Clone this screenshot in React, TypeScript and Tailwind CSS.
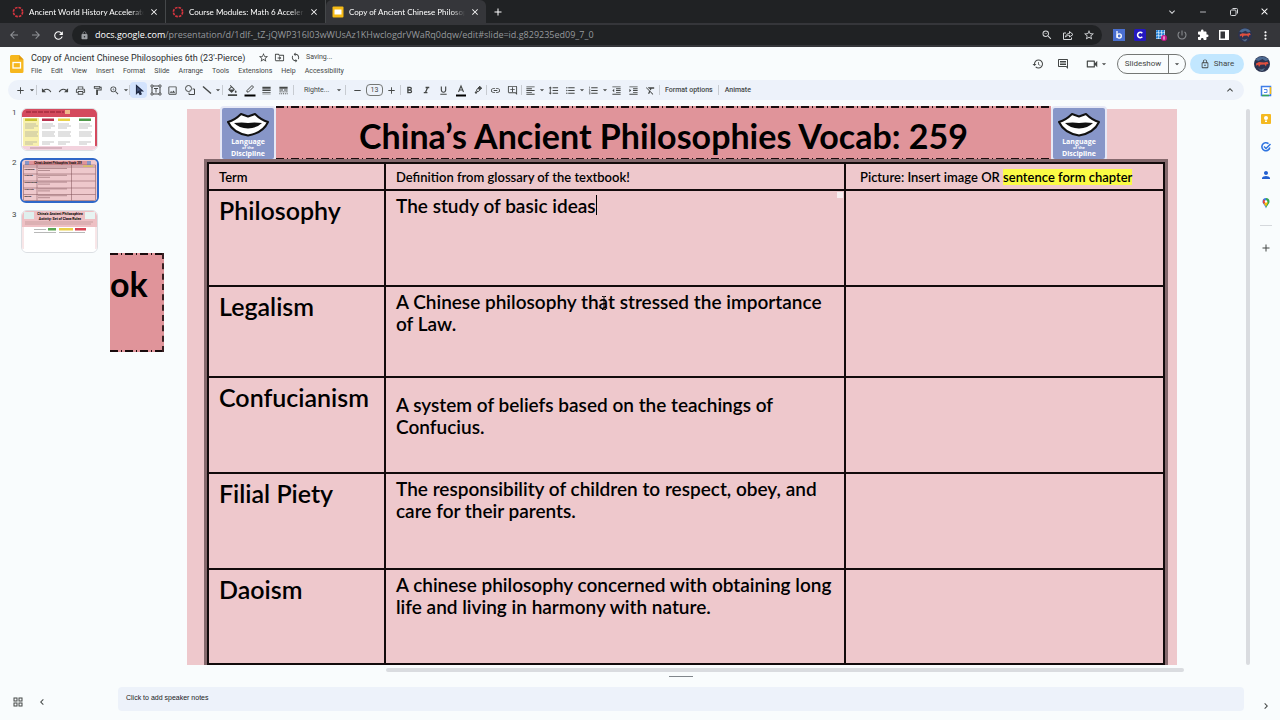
import { ReactNode } from 'react';
import type { IconType } from 'react-icons';
import {
  MdAdd, MdArrowBack, MdArrowDropDown, MdArrowForward, MdChevronLeft, MdChevronRight, MdClose, MdExpandLess,
  MdExpandMore, MdExtension, MdFormatAlignLeft, MdFormatBold, MdFormatClear, MdFormatColorFill,
  MdFormatIndentDecrease, MdFormatIndentIncrease, MdFormatItalic, MdFormatLineSpacing, MdFormatListBulleted,
  MdFormatListNumbered, MdFormatUnderlined, MdHistory, MdLineStyle, MdLineWeight, MdLink, MdLock, MdMoreVert,
  MdOutlineAddComment, MdOutlineDriveFileMove, MdOutlineFormatPaint, MdOutlineGridView, MdOutlineImage,
  MdOutlineInsertComment, MdOutlineLock, MdOutlinePrint, MdOutlineVideocam, MdPerson, MdPowerSettingsNew,
  MdRedo, MdRefresh, MdRemove, MdStarBorder, MdSync, MdUndo, MdZoomIn, MdZoomOut,
} from 'react-icons/md';

const menus = ['File', 'Edit', 'View', 'Insert', 'Format', 'Slide', 'Arrange', 'Tools', 'Extensions', 'Help', 'Accessibility'];

interface VocabRow {
  term: string;
  definition: string;
  row: string;
  pad: string;
  caret?: boolean;
  pointer?: boolean;
}

const vocab: VocabRow[] = [
  { term: 'Philosophy', definition: 'The study of basic ideas', row: 'h-24', pad: 'pt-1', caret: true },
  { term: 'Legalism', definition: 'A Chinese philosophy that stressed the importance of Law.', row: 'h-[91px]', pad: 'pt-1', pointer: true },
  { term: 'Confucianism', definition: 'A system of beliefs based on the teachings of Confucius.', row: 'h-24', pad: 'pt-4' },
  { term: 'Filial Piety', definition: 'The responsibility of children to respect, obey, and care for their parents.', row: 'h-24', pad: 'pt-1' },
  { term: 'Daoism', definition: 'A chinese philosophy concerned with obtaining long life and living in harmony with nature.', row: 'h-[95px]', pad: 'pt-1' },
];

/* ---------- Small drawings ---------- */

function CanvasIcon() {
  return (
    <svg className="h-3 w-3 shrink-0" viewBox="0 0 12 12" fill="none">
      <circle cx="6" cy="6" r="4.6" stroke="#d8353f" strokeWidth="1.6" strokeDasharray="2.6 1" />
    </svg>
  );
}

function SlidesTabIcon() {
  return (
    <svg className="h-3 w-3 shrink-0" viewBox="0 0 12 12">
      <rect x="0.5" y="0.5" width="11" height="11" rx="1" fill="#f5ba15" />
      <rect x="2.5" y="3.5" width="7" height="5" fill="#fff" />
    </svg>
  );
}

function SlidesLogo() {
  return (
    <svg className="h-[18px] w-[14px] shrink-0" viewBox="0 0 14 18">
      <path d="M1.5 0H9l4.5 4.5v12a1.5 1.5 0 0 1-1.5 1.5H1.5A1.5 1.5 0 0 1 0 16.500V1.500A1.500 1.500 0 0 1 1.500 0z" fill="#f6b71e" />
      <path d="M9 0l4.500 4.500H9z" fill="#e09a10" />
      <rect x="3" y="7.500" width="7.500" height="5.500" fill="none" stroke="#fff" strokeWidth="1.300" />
    </svg>
  );
}

function Avatar({ className }: { className: string }) {
  return (
    <svg className={className} viewBox="0 0 16 16">
      <circle cx="8" cy="8" r="8" fill="#2b3350" />
      <path d="M1.500 4a8 8 0 0 1 13 0l-3 1-3-2-4 2z" fill="#4c6a92" />
      <path d="M2 7.500l3-1.500 5 .5 3.500-.8 1 2.300-2 .2-.5 2.300-1.500-2-4 .3-1.500 2.200-.8-2.300-2 1z" fill="#e0503f" />
      <path d="M4 12l3 1.500 4-1.500-2 3H7z" fill="#566b86" />
    </svg>
  );
}

function CursorIcon() {
  return (
    <svg className="h-3 w-3" viewBox="0 0 12 12" fill="none" stroke="#1f2a44" strokeWidth="1.200">
      <path d="M3.500 1.500v8l2-2 1.500 3 1.200-.6-1.400-2.900h2.700z" fill="#44547c" />
    </svg>
  );
}

function TextBoxIcon() {
  return (
    <svg className="h-3 w-3" viewBox="0 0 12 12" fill="none" stroke="currentColor">
      <rect x="2" y="2" width="8" height="8" />
      <path d="M4 4.500h4M6 4.500V8.500" />
      <path d="M1 1h2v2H1zM9 1h2v2H9zM1 9h2v2H1zM9 9h2v2H9z" fill="#edf2fa" strokeWidth="0.800" />
    </svg>
  );
}

function ShapeIcon() {
  return (
    <svg className="h-3 w-3" viewBox="0 0 12 12" fill="none" stroke="currentColor">
      <circle cx="4.500" cy="4.500" r="3" />
      <path d="M8.500 5H10.500V10.500H5V8.500" />
    </svg>
  );
}

function LineIcon() {
  return (
    <svg className="h-3 w-3" viewBox="0 0 12 12" fill="none" stroke="currentColor" strokeWidth="1.400">
      <path d="M2 2.500L10 9.500" />
    </svg>
  );
}

function PenIcon() {
  return (
    <svg className="h-[14px] w-3" viewBox="0 0 12 14">
      <path d="M3 9V7.500L8 2.500 9.500 4 4.500 9z" fill="none" stroke="currentColor" />
      <rect x="0.500" y="11.500" width="11" height="2" fill="#000" />
    </svg>
  );
}

function TextColorIcon() {
  return (
    <svg className="h-[14px] w-3" viewBox="0 0 12 14">
      <path d="M3.500 9L6 3l2.500 6M4.400 7h3.200" fill="none" stroke="currentColor" strokeWidth="1.100" />
      <rect x="1" y="11.500" width="10" height="2" fill="#000" />
    </svg>
  );
}

function HighlighterIcon() {
  return (
    <svg className="h-3 w-3" viewBox="0 0 12 12" fill="none" stroke="currentColor">
      <path d="M4.500 6l3-3.500L9.500 4 6.500 7.500H5z" />
      <path d="M7.500 2.500l2 1.500L8 5.500 6 4.500zM4 7.500L3 9h2z" fill="currentColor" />
    </svg>
  );
}

function ShareIcon() {
  return (
    <svg className="h-3 w-3" viewBox="0 0 12 12" fill="none" stroke="currentColor">
      <path d="M4 4H1.500v6.500h8V8.500" />
      <path d="M3.500 8C4 5.500 5.500 4.500 7.500 4.500V2.500L11 5.500 7.500 8V6.300C6 6.300 4.500 6.800 3.500 8z" />
    </svg>
  );
}

function Lips() {
  return (
    <svg className="h-[26px] w-11" viewBox="0 0 44 26">
      <path d="M2 11Q9 9 15 3L22 5.500 29 3Q35 9 42 11Q37 22 22 24.500Q7 22 2 11z" fill="#fff" stroke="#111" strokeWidth="2" strokeLinejoin="round" />
      <path d="M8 12Q16 11 22 12Q28 11 36 12Q31 17 22 17.500Q13 17 8 12z" fill="#111" />
    </svg>
  );
}

/* ---------- Shared pieces ---------- */

function Tool({ label, children, active = false }: { label: string; children: ReactNode; active?: boolean }) {
  return (
    <button aria-label={label} className={`flex h-4 w-[17px] shrink-0 items-center justify-center rounded-sm ${active ? 'bg-[#d3e3fd]' : ''}`}>
      {children}
    </button>
  );
}

function IconTool({ icon: Icon, label }: { icon: IconType; label: string }) {
  return (
    <button aria-label={label} className="flex h-4 w-[17px] shrink-0 items-center justify-center">
      <Icon className="h-[11px] w-[11px]" />
    </button>
  );
}

function Caret() {
  return <MdArrowDropDown className="-mx-[2px] h-[10px] w-[10px] shrink-0" />;
}

function Separator({ className = '' }: { className?: string }) {
  return <span className={`h-[10px] w-px shrink-0 bg-[#c7cbd1] ${className}`} />;
}

interface TabProps {
  title: string;
  icon: ReactNode;
  active?: boolean;
}

function Tab({ title, icon, active = false }: TabProps) {
  return (
    <div className={`flex w-40 items-center gap-[5px] pr-[6px] pl-[6px] ${active ? 'rounded-t-md bg-[#35363a]' : 'border-r border-[#45484a]'}`}>
      {icon}
      <button className="min-w-0 flex-1 text-left font-['Lato',sans-serif] text-[8px] whitespace-nowrap text-white [mask-image:linear-gradient(90deg,#000_88%,transparent)]">
        {title}
      </button>
      <button aria-label="Close tab"><MdClose className="h-[10px] w-[10px] text-white" /></button>
    </div>
  );
}

function DashDot() {
  return <div className="h-[2px] bg-[repeating-linear-gradient(90deg,#1a0b0d_0_8px,transparent_8px_11px,#1a0b0d_11px_12px,transparent_12px_15px)]" />;
}

function DisciplineBadge() {
  return (
    <div className="flex h-[55px] w-14 shrink-0 flex-col items-center rounded-sm border-2 border-[#e6e8f6] bg-[#8796c8] pt-[3px] font-['Open_Sans',sans-serif] text-[7px] leading-[7px] font-bold text-white">
      <Lips />
      <span className="mt-px">Language</span>
      <span className="text-[4px] leading-[5px]">of the</span>
      <span>Discipline</span>
    </div>
  );
}

/* ---------- Browser ---------- */

function BrowserChrome() {
  return (
    <div className="bg-[#202224] font-['Open_Sans',sans-serif] text-[#d5d7da]">
      <div className="flex h-[23px] pl-[6px]">
        <Tab title="Ancient World History Accelerate" icon={<CanvasIcon />} />
        <Tab title="Course Modules: Math 6 Acceler" icon={<CanvasIcon />} />
        <Tab title="Copy of Ancient Chinese Philosop" icon={<SlidesTabIcon />} active />
        <button aria-label="New tab" className="px-[6px]"><MdAdd className="h-3 w-3 text-white" /></button>
        <div className="ml-auto flex items-center">
          <button aria-label="Search tabs" className="flex w-[31px] justify-center"><MdExpandMore className="h-3 w-3" /></button>
          <button aria-label="Minimize" className="flex w-[31px] justify-center"><MdRemove className="h-[10px] w-[10px]" /></button>
          <button aria-label="Restore" className="flex w-[31px] justify-center">
            <svg className="h-2 w-2" viewBox="0 0 8 8" fill="none" stroke="currentColor">
              <rect x="0.500" y="2" width="5.500" height="5.500" rx="1" />
              <path d="M2.500 .5H6.500a1 1 0 0 1 1 1V5.500" />
            </svg>
          </button>
          <button aria-label="Close" className="flex w-[31px] justify-center"><MdClose className="h-[11px] w-[11px] text-white" /></button>
        </div>
      </div>
      <div className="flex h-6 items-center bg-[#35363a] pr-1">
        <button aria-label="Back" className="flex w-7 justify-center"><MdArrowBack className="h-3 w-3 text-[#8f9296]" /></button>
        <button aria-label="Forward" className="flex w-4 justify-center"><MdArrowForward className="h-3 w-3 text-[#8f9296]" /></button>
        <button aria-label="Reload" className="flex w-7 justify-center"><MdRefresh className="h-[13px] w-[13px] text-white" /></button>
        <div className="flex h-5 min-w-0 flex-1 items-center rounded-full bg-[#202224] pr-[7px] pl-2">
          <MdLock className="h-[9px] w-[9px] shrink-0 text-[#9a9da1]" />
          <div role="textbox" aria-label="Address" tabIndex={0} className="min-w-0 flex-1 overflow-hidden pl-[6px] text-[9px] leading-4 whitespace-nowrap text-[#96999d]">
            <span className="text-white">docs.google.com</span>/presentation/d/1dlf-_tZ-jQWP316I03wWUsAz1KHwclogdrVWaRq0dqw/edit#slide=id.g829235ed09_7_0
          </div>
          <div className="flex gap-[9px]">
            <button aria-label="Zoom"><MdZoomOut className="h-3 w-3" /></button>
            <button aria-label="Share page"><ShareIcon /></button>
            <button aria-label="Bookmark"><MdStarBorder className="h-3 w-3" /></button>
          </div>
        </div>
        <div className="ml-[6px] flex items-center">
          <button aria-label="Bitmoji" className="flex w-[21px] justify-center">
            <svg className="h-3 w-3" viewBox="0 0 12 12" fill="none" stroke="#fff" strokeWidth="1.300">
              <rect width="12" height="12" fill="#4a6fd0" stroke="none" />
              <path d="M4 2v7" /><circle cx="6.200" cy="7" r="2.100" />
            </svg>
          </button>
          <button aria-label="Clever" className="flex w-[21px] justify-center">
            <svg className="h-3 w-3" viewBox="0 0 12 12" fill="none" stroke="#fff" strokeWidth="1.600">
              <rect width="12" height="12" rx="1.500" fill="#2418c0" stroke="none" />
              <path d="M8.300 4.200A2.700 2.700 0 1 0 8.300 7.800" />
            </svg>
          </button>
          <button aria-label="App grid" className="flex w-[21px] justify-center">
            <svg className="h-3 w-3" viewBox="0 0 12 12">
              <rect x="1" y="1" width="9" height="9" fill="#e8f4ff" />
              <path d="M2.500 1v9M5.500 1v9M8.500 1v9M1 2.500h9M1 5.500h9M1 8.500h9" stroke="#2784d8" strokeWidth="1.800" strokeDasharray="2.200 .8" />
              <circle cx="9" cy="9" r="3" fill="#c2188b" /><path d="M9 7.300v3.400" stroke="#fff" />
            </svg>
          </button>
          <button aria-label="Power" className="flex w-[21px] justify-center"><MdPowerSettingsNew className="h-3 w-3 text-[#8b8e92]" /></button>
          <button aria-label="Extensions" className="flex w-[21px] justify-center"><MdExtension className="h-3 w-3 text-white" /></button>
          <button aria-label="Side panel" className="flex w-[21px] justify-center">
            <svg className="h-[10px] w-[10px]" viewBox="0 0 10 10"><rect width="10" height="10" fill="#fff" /><rect x="1.500" y="1.500" width="4.500" height="7" fill="#35363a" /></svg>
          </button>
          <button aria-label="Profile" className="flex w-[21px] justify-center"><Avatar className="h-[14px] w-[14px]" /></button>
          <button aria-label="Browser menu" className="flex w-[21px] justify-center"><MdMoreVert className="h-[13px] w-[13px] text-white" /></button>
        </div>
      </div>
    </div>
  );
}

/* ---------- Slides header and toolbar ---------- */

function DocHeader() {
  return (
    <header className="flex h-[33px] items-center pr-[10px] pl-[10px] text-[#444746]">
      <SlidesLogo />
      <div className="ml-[7px]">
        <div className="flex h-[14px] items-center gap-[5px]">
          <input aria-label="Document title" defaultValue="Copy of Ancient Chinese Philosophies 6th (23'-Pierce)" className="w-[222px] text-[9px] leading-[14px] text-[#2b2d2f]" />
          <button aria-label="Star"><MdStarBorder className="h-[11px] w-[11px]" /></button>
          <button aria-label="Move"><MdOutlineDriveFileMove className="h-[11px] w-[11px]" /></button>
          <MdSync className="h-[11px] w-[11px]" />
          <span className="text-[7px]">Saving...</span>
        </div>
        <nav className="flex h-3 gap-[9px] text-[7px] leading-3">
          {menus.map((menu) => (
            <button key={menu}>{menu}</button>
          ))}
        </nav>
      </div>
      <div className="ml-auto flex items-center">
        <button aria-label="Version history" className="mr-[13px]"><MdHistory className="h-3 w-3" /></button>
        <button aria-label="Comments" className="mr-4"><MdOutlineInsertComment className="h-3 w-3" /></button>
        <button aria-label="Join a call" className="mr-[10px] flex items-center gap-[2px]"><MdOutlineVideocam className="h-[14px] w-[14px]" /><Caret /></button>
        <div className="mr-1 flex h-5 items-center rounded-full border border-[#747775] text-[8px]">
          <button className="flex h-full w-[51px] items-center justify-center border-r border-[#747775]">Slideshow</button>
          <button aria-label="Slideshow options" className="flex w-4 justify-center"><Caret /></button>
        </div>
        <button className="mr-[10px] flex h-5 w-[54px] items-center justify-center gap-1 rounded-full bg-[#c2e7ff] text-[8px]">
          <MdOutlineLock className="h-[10px] w-[10px]" />Share
        </button>
        <button aria-label="Account"><Avatar className="h-4 w-4" /></button>
      </div>
    </header>
  );
}

function Toolbar() {
  return (
    <div className="mr-2 ml-2 flex h-5 items-center overflow-hidden rounded-full bg-[#edf2fa] pl-1 text-[#444746]">
      <IconTool icon={MdAdd} label="New slide" /><Caret />
      <Separator className="mx-px" />
      <IconTool icon={MdUndo} label="Undo" />
      <IconTool icon={MdRedo} label="Redo" />
      <IconTool icon={MdOutlinePrint} label="Print" />
      <IconTool icon={MdOutlineFormatPaint} label="Paint format" />
      <IconTool icon={MdZoomIn} label="Zoom" /><Caret />
      <Separator />
      <Tool label="Select" active><CursorIcon /></Tool>
      <Tool label="Text box"><TextBoxIcon /></Tool>
      <IconTool icon={MdOutlineImage} label="Insert image" />
      <Tool label="Shape"><ShapeIcon /></Tool>
      <Tool label="Line"><LineIcon /></Tool><Caret />
      <Separator className="mx-px" />
      <IconTool icon={MdFormatColorFill} label="Fill color" />
      <Tool label="Border color"><PenIcon /></Tool>
      <IconTool icon={MdLineWeight} label="Border weight" />
      <IconTool icon={MdLineStyle} label="Border dash" />
      <Separator className="mr-[10px] ml-px" />
      <select aria-label="Font" className="w-8 shrink-0 appearance-none text-[7px] leading-4">
        <option>Righte...</option>
      </select>
      <Caret />
      <Separator className="mx-[3px]" />
      <IconTool icon={MdRemove} label="Decrease font size" />
      <input aria-label="Font size" defaultValue="13" className="h-3 w-[17px] shrink-0 rounded-sm border border-[#747775] text-center text-[7px]" />
      <IconTool icon={MdAdd} label="Increase font size" />
      <Separator />
      <IconTool icon={MdFormatBold} label="Bold" />
      <IconTool icon={MdFormatItalic} label="Italic" />
      <IconTool icon={MdFormatUnderlined} label="Underline" />
      <Tool label="Text color"><TextColorIcon /></Tool>
      <Tool label="Highlight color"><HighlighterIcon /></Tool>
      <Separator />
      <IconTool icon={MdLink} label="Insert link" />
      <IconTool icon={MdOutlineAddComment} label="Add comment" />
      <Separator />
      <IconTool icon={MdFormatAlignLeft} label="Align" /><Caret />
      <IconTool icon={MdFormatLineSpacing} label="Line spacing" />
      <IconTool icon={MdFormatListBulleted} label="Bulleted list" /><Caret />
      <IconTool icon={MdFormatListNumbered} label="Numbered list" /><Caret />
      <IconTool icon={MdFormatIndentDecrease} label="Decrease indent" />
      <IconTool icon={MdFormatIndentIncrease} label="Increase indent" />
      <IconTool icon={MdFormatClear} label="Clear formatting" />
      <Separator />
      <button className="px-[5px] text-[7px] font-medium whitespace-nowrap">Format options</button>
      <Separator />
      <button className="px-[6px] text-[7px] font-medium">Animate</button>
      <button aria-label="Hide menus" className="mr-2 ml-auto"><MdExpandLess className="h-3 w-3" /></button>
    </div>
  );
}

/* ---------- Filmstrip ---------- */

function ThumbOne() {
  const columns = [
    { x: 3, color: '#c9c23a' }, { x: 20, color: '#b8324e' }, { x: 36, color: '#e8d24a' }, { x: 57, color: '#4f9a4a' },
  ];
  return (
    <svg className="block w-full" viewBox="0 0 75 41">
      <rect width="75" height="41" fill="#fff" />
      <rect width="75" height="8" fill="#d44a5e" />
      <path d="M4 3h38" stroke="#a52c40" strokeWidth="1.500" strokeDasharray="5 1" />
      <rect x="43" y="1" width="5" height="4" fill="#f0b98a" />
      <rect x="1" y="9" width="16" height="28" fill="#f8f1ae" />
      <rect x="73" y="8" width="2" height="30" fill="#d44a5e" />
      <rect y="37" width="75" height="4" fill="#f3d3de" />
      {columns.map(({ x, color }) => (
        <g key={x}>
          <rect x={x} y="9.500" width="12" height="2.500" fill={color} />
          <path d={`M${x} 15h11M${x} 17h13M${x} 19h9M${x} 23h13M${x} 25h12M${x} 27h13M${x} 33h12M${x} 35h8`} stroke="#9b9b9b" strokeWidth="0.600" />
        </g>
      ))}
      <path d="M8 39h32" stroke="#a37585" strokeWidth="0.700" />
    </svg>
  );
}

function ThumbTwo() {
  return (
    <svg className="block w-full" viewBox="0 0 75 41">
      <rect width="75" height="41" fill="#eec8cc" />
      <rect x="7" y="1" width="58" height="4" fill="#e0949a" />
      <rect x="3" y="1" width="4" height="4" fill="#8796c8" />
      <rect x="65" y="1" width="4" height="4" fill="#8796c8" />
      <text x="36" y="4" textAnchor="middle" fontSize="2.600" fontWeight="700">China’s Ancient Philosophies Vocab: 259</text>
      <rect x="61" y="5.500" width="10" height="1.200" fill="#f6ee4b" />
      <path d="M1.500 5h72v35.500h-72zM1.500 7h72M1.500 14h72M1.500 21h72M1.500 28h72M1.500 34.500h72M15 5v35.500M49.500 5v35.500" fill="none" stroke="#7c4f55" strokeWidth="0.500" />
      {vocab.map(({ term }, i) => (
        <g key={term}>
          <text x="2.500" y={9.5 + i * 6.8} fontSize="2" fontWeight="700">{term}</text>
          <path d={`M16 ${8.5 + i * 6.8}h29M16 ${10.5 + i * 6.8}h12`} stroke="#8d6469" strokeWidth="0.600" />
        </g>
      ))}
    </svg>
  );
}

function ThumbThree() {
  return (
    <svg className="block w-full" viewBox="0 0 75 41">
      <rect width="75" height="41" fill="#fff" />
      <rect width="75" height="16" fill="#eec0c4" />
      <rect x="2" y="1" width="10" height="7" fill="#dff0ee" />
      <rect x="63" y="1" width="10" height="7" fill="#e8f4f2" />
      <text x="38" y="4" textAnchor="middle" fontSize="3.500" fontWeight="700">China’s Ancient Philosophies</text>
      <text x="38" y="8.500" textAnchor="middle" fontSize="3.500" fontWeight="700">Activity: Set of Class Rules</text>
      <path d="M3 11h68M3 13h66" stroke="#b38a8e" strokeWidth="0.600" />
      <path d="M12 18.500h12M12 21.500h22M37 21.500h26" stroke="#888" strokeWidth="0.600" />
      <rect x="26" y="17" width="8" height="2.500" fill="#5ca653" />
      <rect x="37" y="17" width="14" height="2.500" fill="#ead04b" />
      <rect x="53" y="17" width="11" height="2.500" fill="#d84554" />
      <path d="M1 16v22M74 16v22" stroke="#eec0c4" strokeWidth="0.800" />
    </svg>
  );
}

function Filmstrip() {
  const thumbs = [<ThumbOne />, <ThumbTwo />, <ThumbThree />];
  return (
    <aside className="flex w-[110px] shrink-0 flex-col pt-2 pb-3">
      <ol className="flex flex-col gap-[7px]">
        {thumbs.map((thumb, i) => (
          <li key={i} className="flex gap-1 pl-3 text-[8px] leading-[10px] text-[#444746]">
            <span className="w-1">{i + 1}</span>
            <button
              aria-label={`Slide ${i + 1}`}
              className={`overflow-hidden rounded-md ${i === 1 ? 'w-[79px] border-2 border-[#2f67c8]' : 'mx-px w-[77px] border border-[#dcdfe3]'}`}
            >
              {thumb}
            </button>
          </li>
        ))}
      </ol>
      <div className="mt-auto flex items-center gap-3 pl-3 text-[#444746]">
        <button aria-label="Grid view"><MdOutlineGridView className="h-3 w-3" /></button>
        <button aria-label="Hide filmstrip"><MdChevronLeft className="h-3 w-3" /></button>
      </div>
    </aside>
  );
}

/* ---------- Slide ---------- */

function VocabTable() {
  return (
    <table className="w-full table-fixed border-collapse border-2 border-[#120a0b] text-left text-black">
      <thead>
        <tr className="h-[27px] text-[13px] leading-5">
          <th className="w-[177px] border-2 border-[#120a0b] pl-[10px] font-semibold">Term</th>
          <th className="w-[460px] border-2 border-[#120a0b] pl-[10px] font-semibold">Definition from glossary of the textbook!</th>
          <th className="border-2 border-[#120a0b] pl-[14px] font-semibold whitespace-nowrap">
            Picture: Insert image OR <mark className="bg-[#fbfb45] text-black">sentence form chapter</mark>
          </th>
        </tr>
      </thead>
      <tbody>
        {vocab.map(({ term, definition, row, pad, caret, pointer }) => (
          <tr key={term} className={`${row} align-top`}>
            <th className="border-2 border-[#120a0b] pt-[3px] pl-[10px] text-[25px] leading-8 font-semibold">{term}</th>
            <td className={`relative border-2 border-[#120a0b] pr-[6px] pl-[10px] text-[19px] leading-[22px] font-semibold ${pad}`}>
              {definition}
              {caret && (
                <>
                  <span className="inline-block h-5 w-px bg-black align-top" />
                  <span className="absolute top-px right-px h-[6px] w-[6px] bg-[#f7eef0]" />
                </>
              )}
              {pointer && (
                <svg className="absolute top-[9px] left-[215px] h-[14px] w-[6px]" viewBox="0 0 6 14" fill="none" stroke="#000">
                  <path d="M1 .5h1.500l.5.5.5-.5H5M3 1v12M1 13.500h1.500l.5-.5.5.5H5" />
                </svg>
              )}
            </td>
            <td className="border-2 border-[#120a0b]" />
          </tr>
        ))}
      </tbody>
    </table>
  );
}

function Slide() {
  return (
    <div className="relative mr-[69px] ml-[23px] flex-1 bg-[#eec8cc] pt-[50px] pr-[9px] pl-[17px]">
      {/* Banner sits above the top edge of the slide */}
      <div className="absolute -top-[3px] right-[70px] left-[33px] flex items-start">
        <DisciplineBadge />
        <div className="flex h-[54px] flex-1 flex-col justify-between bg-[#e0949a]">
          <DashDot />
          <h1 className="pt-1 text-center text-[34px] leading-[45px] font-bold whitespace-nowrap text-black">
            China’s Ancient Philosophies Vocab: 259
          </h1>
          <DashDot />
        </div>
        <DisciplineBadge />
      </div>
      <div className="relative border-x-[3px] border-t-[3px] border-[#85696d]">
        <VocabTable />
      </div>
    </div>
  );
}

function Editor() {
  return (
    <main className="flex min-w-0 flex-1 flex-col">
      <div className="flex pt-[9px]">
        <div className="flex min-w-0 flex-1 font-['Lato',sans-serif]">
          <div className="mt-36 flex h-[99px] w-[54px] shrink-0 flex-col justify-between border-r-2 border-dashed border-[#3a2023] bg-[#e0949a]">
            <DashDot />
            <p className="mb-auto pt-1 text-[34px] leading-[50px] font-bold text-black">ok</p>
            <DashDot />
          </div>
          <Slide />
        </div>
        <div className="mr-[2px] w-1 rounded-full bg-[#dadce0]" />
      </div>
      <div className="mt-[3px] mr-[68px] ml-[276px] h-1 rounded-full bg-[#dadce0]" />
      <div className="mx-auto mt-1 h-px w-6 bg-[#80868b]" />
      <textarea
        aria-label="Speaker notes"
        placeholder="Click to add speaker notes"
        rows={1}
        className="mt-auto mr-2 mb-[9px] ml-2 h-6 resize-none rounded-sm bg-[#edf2fa] px-2 py-[5px] font-['Liberation_Sans',sans-serif] text-[7px] leading-3 placeholder:text-[#202124]"
      />
    </main>
  );
}

function SidePanel() {
  return (
    <aside className="flex w-7 shrink-0 flex-col items-center gap-4 pt-[5px] pb-2 text-[#444746]">
      <button aria-label="Calendar">
        <svg className="h-3 w-3" viewBox="0 0 12 12">
          <path d="M1.500 1.500h9v9h-9z" fill="#fff" stroke="#3f7de8" strokeWidth="1.500" />
          <path d="M10.500 2v7" stroke="#f6bb18" strokeWidth="1.500" /><path d="M2 10.500h7" stroke="#38a457" strokeWidth="1.500" />
          <path d="M4 4.500h3v3H4" fill="none" stroke="#3f7de8" strokeWidth="0.900" />
        </svg>
      </button>
      <button aria-label="Keep">
        <svg className="h-3 w-3" viewBox="0 0 12 12">
          <rect x="1" y="1" width="10" height="10" rx="1" fill="#f4b921" />
          <circle cx="6" cy="5" r="2" fill="#fff" /><rect x="5" y="7.500" width="2" height="1.500" fill="#fff" />
        </svg>
      </button>
      <button aria-label="Tasks">
        <svg className="h-3 w-3" viewBox="0 0 12 12" fill="none">
          <path d="M8.500 2.700A4 4 0 1 0 9.800 6.500" stroke="#2f74e0" strokeWidth="1.600" />
          <path d="M4 5.500l2 2 4.500-4.500" stroke="#2f74e0" strokeWidth="1.500" />
        </svg>
      </button>
      <button aria-label="Contacts"><MdPerson className="h-3 w-3 text-[#2360d0]" /></button>
      <button aria-label="Maps">
        <svg className="h-3 w-3" viewBox="0 0 12 12">
          <path d="M6 1a3.500 3.500 0 0 0-3.500 3.500C2.500 7 5.200 8.500 6 11.500z" fill="#3f7de8" />
          <path d="M6 1a3.500 3.500 0 0 1 3.500 3.500C9.500 7 6.800 8.500 6 11.500z" fill="#36a853" />
          <path d="M3.500 2.200L6 4.500 4 7 2.700 5.500z" fill="#ea4335" /><path d="M4 7l2-2.500 2 1-2 4z" fill="#fbbc05" />
          <circle cx="6" cy="4.500" r="1.200" fill="#fff" />
        </svg>
      </button>
      <hr className="w-3 border-[#d5d8dc]" />
      <button aria-label="Get add-ons"><MdAdd className="h-3 w-3" /></button>
      <button aria-label="Hide side panel" className="mt-auto"><MdChevronRight className="h-3 w-3" /></button>
    </aside>
  );
}

export default function App() {
  return (
    <div className="flex min-h-screen flex-col overflow-hidden bg-[#f9fcfd] font-['Roboto',sans-serif]">
      <BrowserChrome />
      <DocHeader />
      <div className="flex flex-1">
        <div className="flex min-w-0 flex-1 flex-col">
          <Toolbar />
          <div className="flex flex-1">
            <Filmstrip />
            <Editor />
          </div>
        </div>
        <SidePanel />
      </div>
    </div>
  );
}
